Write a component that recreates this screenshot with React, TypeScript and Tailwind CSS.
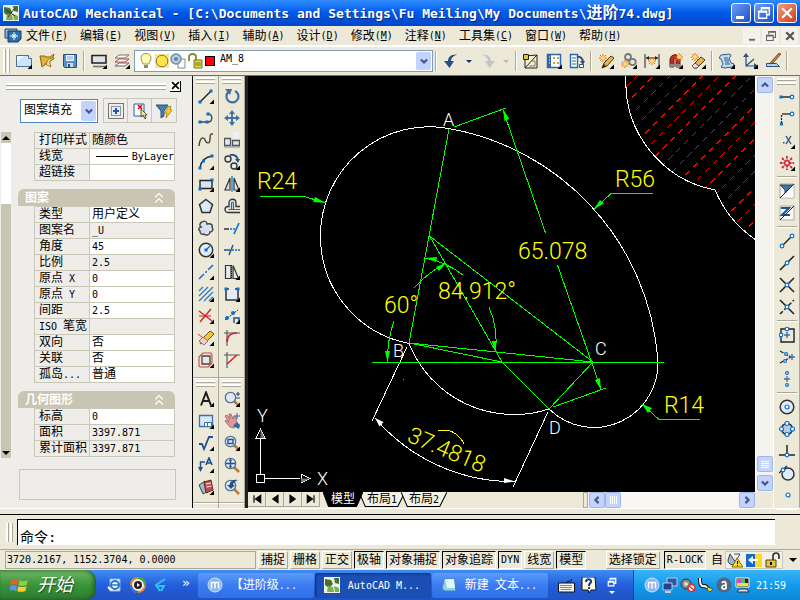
import type { ReactNode } from 'react'
import { clsx } from 'clsx'

const FONT = "font-['DejaVu_Sans_Mono','Noto_Sans_CJK_SC',monospace]"

// Latin runs are half the width of a Chinese glyph, so they get their own size
function Mixed({ text }: { text: string }) {
  return (
    <>
      {text.split(/([\x20-\x7e]+)/).map((part, i) =>
        /^[\x20-\x7e]+$/.test(part) ? (
          <span key={i} className="text-[10px] whitespace-pre">{part}</span>
        ) : (
          part
        ),
      )}
    </>
  )
}

function Svg({ children, className = 'size-4' }: { children: ReactNode; className?: string }) {
  return (
    <svg viewBox="0 0 16 16" fill="none" className={className} aria-hidden="true">
      {children}
    </svg>
  )
}

const NAVY = '#26507f'
const BLUE = '#0b6fd0'
const INK = '#222'

function Dot({ x, y }: { x: number; y: number }) {
  return <rect x={x - 1.5} y={y - 1.5} width="3" height="3" fill={BLUE} />
}

function Ring({ x, y, r = 1.8 }: { x: number; y: number; r?: number }) {
  return <circle cx={x} cy={y} r={r} fill="#fff" stroke={BLUE} strokeWidth="1.2" />
}

function Lens({ children }: { children?: ReactNode }) {
  return (
    <>
      <path d="M10 10l5 5" stroke="#b97f35" strokeWidth="2.6" />
      <circle cx="6.5" cy="6.5" r="5.2" fill="#dbe9f8" stroke="#57718e" strokeWidth="1.3" />
      {children}
    </>
  )
}

function Spark({ x, y }: { x: number; y: number }) {
  return (
    <g>
      <path d={`M${x - 4} ${y}h8M${x} ${y - 4}v8M${x - 3} ${y - 3}l6 6M${x + 3} ${y - 3}l-6 6`} stroke="#ee6a20" strokeWidth="1" />
      <circle cx={x} cy={y} r="2" fill="#ffe25a" />
    </g>
  )
}

function Pencil() {
  return (
    <>
      <path d="M4 15l2-5 7-7 3 2-7 8z" fill="#e9b64c" stroke="#4d3713" strokeWidth="1" />
      <path d="M4 15l2-4 2 2z" fill="#222" />
    </>
  )
}

const icons: Record<string, ReactNode> = {
  // standard bar
  new: <><path d="M.5 2.500h12l3 3v8H.5z" fill="#cfe3fa" stroke="#4c7197" /><path d="M1 3h7L1 9z" fill="#eef6ff" /><path d="M12.500 2.500v3h3" fill="#fff" stroke="#4c7197" /></>,
  open: <><path d="M1 3h5l1 1h4l4-3-2 6-6 4-4 3z" fill="#e3b13f" stroke="#8a6415" /><path d="M15 5c-5 0-8 3-7 5l-2 1 6 3-1-4c-1-2 1-3 4-4z" fill="#f7d982" stroke="#8a6415" strokeWidth=".8" /></>,
  save: <><path d="M1.500 1.500h13v13h-12l-1-1z" fill="#5a8fc8" stroke="#245081" /><path d="M4 2h8v6H4z" fill="#eef4fa" /><path d="M5 4h6M5 6h6" stroke="#86a9cc" /><path d="M5 10h6v4H5z" fill="#cfdbe8" /><path d="M6 11h2v3H6z" fill="#245081" /></>,
  display: <><path d="M1 2.500h14v7.500H1z" fill="#dce2e8" stroke={INK} strokeWidth="1.6" /><path d="M2 13.500h12" stroke="#777" strokeWidth="1.6" /></>,
  layers: <><path d="M5 2h10l-4 3H1z" fill="#fff" stroke="#777" /><path d="M5 6h10l-4 3H1z" fill="#fff" stroke="#c8343c" /><path d="M5 10h10l-4 3H1z" fill="#fff" stroke="#666" /></>,
  undo: <path d="M14.500 1.500C8 1 5 4 5 8H1l5.500 7L11 8H8c0-3 2-5 6.500-6.500z" fill="#2a4f86" />,
  redo: <path d="M1.500 1.500C8 1 11 4 11 8h4l-5.500 7L5 8h3c0-3-2-5-6.500-6.500z" fill="#c3c6c6" />,
  sketch: <><path d="M2 15V3l12-1v13z" fill="#f6efc9" stroke={INK} /><path d="M2 15L14 2" stroke={INK} /><path d="M.5 1.500h5v5h-5z" fill="#e0c832" stroke={INK} /><path d="M9 8h3v5H6" stroke="#777" /></>,
  table: <><path d="M1.500 1.500h13v13h-13z" fill="#fff" stroke="#2f66a6" strokeWidth="1.5" /><path d="M2 2h3v12H2z" fill="#2f66a6" /><path d="M3 4h1M3 7h1M3 10h1" stroke="#fff" /><path d="M7 4h2v2H7zM11 4h2v2h-2zM7 9h2v2H7zM11 9h2v2h-2z" fill="#c0a542" /></>,
  exportTable: <><path d="M1.500 1.500h7v13h-7z" fill="#fff" stroke="#2f66a6" strokeWidth="1.4" /><path d="M3 5h4M3 8h4M3 11h4" stroke="#2f66a6" /><path d="M8 4c4-1 6 2 6 6" stroke="#2a4f86" strokeWidth="2" /><path d="M11 8h5l-2 4z" fill="#2a4f86" /><path d="M10.500 11.500h4v3h-4z" fill="#fff" stroke="#2a4f86" /></>,
  pen: <><Pencil /><Spark x={5} y={5} /></>,
  gears: <><circle cx="7" cy="4" r="3" stroke="#777" strokeWidth="1.8" /><circle cx="11.500" cy="9" r="3.200" stroke="#777" strokeWidth="1.8" /><Spark x={4} y={11} /></>,
  dims: <><path d="M1 1v14M15 1v14M2 5h12" stroke={INK} /><path d="M2 5l3-2v4zM14 5l-3-2v4z" fill={INK} /><Spark x={8} y={8} /></>,
  magnet: <><path d="M3 14V7c0-7 10-7 10 0v7H9V7c0-2-2-2-2 0v7z" fill="#c22b25" stroke="#6d1612" /><path d="M3 11h4v3H3zM9 11h4v3H9z" fill="#888" /><Spark x={12} y={4} /></>,
  eraser: <><path d="M2 13l9-9 4 3-8 8H4z" fill="#e9b64c" stroke="#4d3713" /><path d="M2 13l3-3 4 3-2 2H4z" fill="#f7dfe4" stroke="#555" /><Spark x={5} y={4} /></>,
  roll: <><path d="M2 2l9-1 1 2-2 2 2 5 3 1-1 3-9 1-3-1 2-3-2-5-2-1z" fill="#c4d8ee" stroke="#2f5b8d" /><path d="M5 5h4M5 7h5M6 9h4M6 11h5" stroke="#2f5b8d" /></>,
  axes: <><path d="M4 2v11h11M4 13l8-7" stroke={NAVY} strokeWidth="1.2" /><path d="M1 4l3-4 3 4zM12 10l4 3-4 3z" fill={NAVY} /></>,
  edit: <><path d="M1.500 10.500h10l3 3h-13z" fill="#b9d4f0" stroke={NAVY} /><path d="M6 9L14 0l2 1-8 9-3 1z" fill="#c9803a" stroke="#5f3913" strokeWidth=".8" /></>,
  // draw
  line: <><path d="M2 14L13 3" stroke={INK} strokeWidth="1.4" /><Dot x={2} y={14} /><Dot x={13} y={3} /></>,
  pline: <><path d="M2 12h8c5 0 5-8 0-8" stroke="#445" strokeWidth="1.4" /><Dot x={2} y={12} /><Dot x={9} y={12} /><Dot x={10} y={4} /></>,
  spline: <path d="M1 14C2 4 6 5 7 8s5 5 5-1 1-5 3-5" stroke="#444" strokeWidth="1.4" />,
  arc: <><path d="M2 14C3 7 7 3 14 2" stroke={INK} strokeWidth="1.5" /><Dot x={2} y={14} /><Dot x={5.500} y={7} /><Dot x={14} y={2} /></>,
  rect: <><path d="M2 4.500h12v8H2z" fill="#d5e5f6" stroke={INK} strokeWidth="1.4" /><Dot x={2} y={13} /><Dot x={14} y={4} /></>,
  polygon: <path d="M8 1.500l6.500 5-2.500 8H4l-2.500-8z" fill="#dbe8f5" stroke="#333" strokeWidth="1.5" />,
  cloud: <path d="M4 2c3-2 5 0 5 2 4-1 6 1 5 3 2 3 0 5-2 5 0 3-4 4-6 2-3 1-4-1-4-3-2-1-1-4 1-4-2-2-1-4 1-5z" fill="#d5e2ee" stroke="#444" strokeWidth="1.4" />,
  circle: <><circle cx="8" cy="8" r="6.700" fill="#e2eefa" stroke="#333" strokeWidth="1.5" /><path d="M8 8l4-4" stroke={BLUE} strokeWidth="1.3" /><Dot x={8} y={8} /></>,
  xline: <path d="M1 15L15 1" stroke={BLUE} strokeWidth="1.5" strokeDasharray="7 2 2 2" />,
  hatch: <path d="M1 5l4-4M1 10l9-9M1 15L15 1M6 15l9-9M11 15l4-4" stroke="#3477bd" strokeWidth="1.3" />,
  trim: <><path d="M1 3l13 10M2 14L13 1" stroke="#d3222a" strokeWidth="1.4" /><path d="M1 8h12" stroke="#d3222a" strokeWidth="1" /></>,
  rub: <><path d="M2 14L14 2" stroke="#c33" strokeWidth="1.4" /><path d="M5 8l7-7 4 3-7 7z" fill="#f0c832" stroke="#6b5310" /><path d="M1 11l4-4 5 4-4 4z" fill="#f3ccd2" stroke="#777" /><path d="M0 4l5 4" stroke="#c33" /></>,
  bound: <><path d="M4 4h8v8H4z" fill="#e8e6e0" stroke="#444" strokeWidth="1.300" /><path d="M1 5l4-4h8l1 2v8l-4 4H2l-1-1z" stroke="#c8474c" strokeWidth="1.1" /></>,
  text: <path d="M3 14.500L8 1.500l5 13M5 10h6" stroke="#1e1e1e" strokeWidth="2" />,
  sheet: <><path d="M1.500 2.500h13v11h-13z" fill="#d7e8fa" stroke="#3a70aa" strokeWidth="1.3" /><path d="M6.500 9.500h7v4h-7z" fill="#fff" stroke="#3a70aa" /><path d="M9.500 9.500v4" stroke="#3a70aa" /></>,
  check: <path d="M1 9h3l2 5L11 2h4" stroke="#22508d" strokeWidth="1.8" />,
  leader: <><path d="M2.500 13V5H7" stroke="#22508d" strokeWidth="1.500" /><path d="M0 10h5l-2.500 5z" fill="#22508d" /><path d="M8 8l3-7 3 7M9 6h4" stroke="#22508d" strokeWidth="1.7" /></>,
  block: <><path d="M1 6l6-4 3 10-5 3z" fill="#99b8dc" stroke="#444" /><path d="M6 3l7-2 2 10-7 3z" fill="#c64b45" stroke="#5d2724" /><path d="M8 5l5-1M8.500 8l5-1" stroke="#fff" /></>,
  // modify
  rotate: <><path d="M5 3.500A6 6 0 1 0 11 3" stroke="#3f71a8" strokeWidth="2.2" /><path d="M1 1h7L6 7z" fill="#3f71a8" /></>,
  move: <><path d="M8 2v12M2 8h12" stroke="#3f71a8" strokeWidth="2" /><path d="M5 4l3-4 3 4zM5 12l3 4 3-4zM4 5L0 8l4 3zM12 5l4 3-4 3z" fill="#3f71a8" /></>,
  copyBox: <><path d="M9 0h6v6H9z" fill="#eaf1fb" /><path d="M.5 6.500h6v7h-6zM8.500 8.500h7v5h-7z" fill="#dbe7f4" stroke="#555" strokeWidth="1.3" /><path d="M0 15h16" stroke="#888" /></>,
  copy: <><circle cx="4" cy="5" r="3" fill="#e2ecf7" stroke="#333" strokeWidth="1.4" /><circle cx="10" cy="12" r="3" fill="#e2ecf7" stroke="#333" strokeWidth="1.4" /><path d="M6 1c5-1 7 1 8 5" stroke="#22508d" strokeWidth="1.8" /><path d="M11 5h5l-2 4z" fill="#22508d" /></>,
  mirror: <><path d="M6 2v12H1zM10 2v12h5z" fill="#e5e5e0" stroke="#333" strokeWidth="1.2" /><path d="M8 0v16" stroke={BLUE} strokeWidth="1.2" /></>,
  offset: <><path d="M16 14.500H4c-4 0-4-6 0-6h1V5c0-5 7-5 7 0v3.500h4" stroke="#333" strokeWidth="1.300" /><path d="M16 11.500H4.500M7.500 11V5.500c0-2 2-2 2 0V11" stroke={BLUE} strokeWidth="1.200" /></>,
  trimLine: <><path d="M0 9h5" stroke={INK} strokeWidth="1.4" /><path d="M6 9h5" stroke={BLUE} strokeWidth="1.3" strokeDasharray="2 1" /><path d="M10 14l5-11" stroke={BLUE} strokeWidth="1.6" /></>,
  extend: <><path d="M0 8h6M5 13l4-10" stroke={NAVY} strokeWidth="1.5" /><path d="M8 8h8" stroke={BLUE} strokeWidth="1.4" strokeDasharray="2 1" /></>,
  scale: <><path d="M1.500 1.500v13H7v-13zM9 1.500L14.500 14.500H9z" fill="#e1e8ef" stroke="#333" strokeWidth="1.2" /><path d="M7.500 1v14" stroke="#111" strokeDasharray="1 1" /></>,
  stretch: <><path d="M2 3v11h12V3" fill="#e1ecf8" stroke="#333" strokeWidth="1.5" /><path d="M2 3h3M11 3h3" stroke="#333" strokeWidth="1.5" /><Dot x={2} y={3} /><Dot x={14} y={3} /></>,
  divide: <><path d="M1 12L14 2" stroke={INK} strokeWidth="1" strokeDasharray="2 1" /><circle cx="3" cy="10" r="2" fill={BLUE} /><circle cx="9" cy="5" r="2" fill={BLUE} /><path d="M10 15v-5h5v5" stroke="#22508d" strokeWidth="1.5" /></>,
  fillet: <><path d="M3 0v16M0 3h16" stroke="#555" strokeWidth="1.1" /><path d="M3 12c0-6 4-9 10-9" stroke="#d3222a" strokeWidth="1.700" /></>,
  chamfer: <><path d="M3 0v16M0 3h16" stroke="#555" strokeWidth="1.1" /><path d="M3 12l10-9" stroke="#d3222a" strokeWidth="1.600" /></>,
  zoomPm: <><Lens /><path d="M12 3h4M14 1v4M12 7h4" stroke="#22508d" strokeWidth="1.2" /></>,
  hand: <><path d="M1 3l2-1 3 4-1-5 2 0 2 5 1-3 2 1 1 7-3 4-4-1-5-6 1-1 3 2z" fill="#d99a98" stroke="#9c5a5e" strokeWidth=".8" /><path d="M9 13l4-4 3 3-1 4z" fill="#2f66a6" /><path d="M13 0v6M10 3h6" stroke="#2f66a6" /></>,
  zoomWin: <Lens><path d="M4 4.500h5v4H4z" stroke="#22508d" strokeWidth="1.4" /></Lens>,
  zoomPan: <Lens><path d="M6.500 2v9M2 6.500h9" stroke="#22508d" strokeWidth="1.4" /><path d="M5 4l1.500-2L8 4zM5 9l1.500 2L8 9z" fill="#22508d" /></Lens>,
  zoomPrev: <Lens><path d="M14 1C9 0 6 2 5.500 6H3l4 4 4-4H9c0-2 2-4 5-5z" fill="#2a4f86" /></Lens>,
  // osnap
  track: <><path d="M2 8h11" stroke={INK} strokeWidth="1.4" /><Dot x={2} y={8} /><Ring x={13} y={8} /></>,
  from: <><path d="M12 3H3" stroke={INK} strokeWidth="1.3" /><path d="M2.500 4v8" stroke={INK} strokeWidth="1.3" strokeDasharray="2 1" /><Dot x={2.500} y={13} /><Ring x={13} y={3} /></>,
  dotX: <><rect x="4" y="9" width="1.500" height="1.500" fill={NAVY} /><path d="M7 3l5 8M12 3l-5 8" stroke={NAVY} strokeWidth="1.4" /></>,
  burst: <><path d="M8 1v5M8 10v5M1 8h5M10 8h5M3 3l3.500 3.500M13 3L9.500 6.500M3 13l3.500-3.500M13 13L9.500 9.500" stroke="#d3222a" strokeWidth="1.800" strokeDasharray="2.500 1" /><circle cx="8" cy="8" r="2" fill="#fff" stroke="#d3222a" /></>,
  filter: <><path d="M1 1h14v14H1z" fill="#f8f8f4" stroke="#aaa" /><path d="M1 2h13l-5 5v3H6V7z" fill="#44759f" stroke="#274b6b" /><path d="M14.500 2v12.500H2z" fill="#fff" /><path d="M1 15L15 1" stroke={INK} /></>,
  zed: <><path d="M1 1h14v14H1z" fill="#f8f8f4" stroke="#aaa" /><path d="M2 3h8L3 10h8" stroke="#22508d" strokeWidth="2" /><path d="M1 15L15 1" stroke={INK} /></>,
  endpoint: <><path d="M3 13L13 3" stroke={INK} strokeWidth="1.5" /><Ring x={3} y={13} /><Ring x={13} y={3} /></>,
  midpoint: <><path d="M1 15L15 1" stroke={INK} strokeWidth="1.6" /><Ring x={8} y={8} /></>,
  intersect: <><path d="M1 15L15 1M1 1l14 14" stroke={INK} strokeWidth="1.5" /><Ring x={8} y={8} /></>,
  apparent: <><path d="M1 15L15 1" stroke={INK} strokeWidth="1.5" strokeDasharray="4 2" /><path d="M1 1l14 14" stroke={INK} strokeWidth="1.6" /><Ring x={8} y={8} /></>,
  center: <><path d="M2 2h13v13H2z" stroke={INK} strokeWidth="1.4" /><path d="M5 8h6M8 5v6" stroke="#3f71a8" strokeWidth="1.4" /><Ring x={8} y={2} /><Ring x={2} y={8} /></>,
  converge: <><path d="M1 2l11 6M1 14l11-6" stroke={INK} strokeWidth="1.200" strokeDasharray="4 1" /><path d="M11 8h5M13 5v6" stroke="#3f71a8" strokeWidth="1.4" /><Ring x={7} y={5} r={1.4} /><Ring x={6} y={12} r={1.4} /></>,
  colon: <><path d="M8 5v6M5 8h6" stroke="#3f71a8" strokeWidth="1.3" /><Ring x={8} y={2} r={1.4} /><Ring x={8} y={14} r={1.4} /></>,
  centre: <><circle cx="8" cy="8" r="6.800" fill="#e2ecf6" stroke="#333" strokeWidth="1.5" /><Ring x={8} y={8} r={2} /></>,
  quadrant: <><circle cx="8" cy="8" r="5.500" fill="#b9cbdc" stroke="#333" strokeWidth="1.500" /><Ring x={8} y={2.500} r={2} /><Ring x={8} y={13.500} r={2} /><Ring x={2.500} y={8} r={2} /><Ring x={13.500} y={8} r={2} /></>,
  perp: <><path d="M0 12h16M8 2v10" stroke={INK} strokeWidth="1.5" /><Ring x={8} y={12} /></>,
  tangent: <><circle cx="9" cy="9" r="6" fill="#e2ecf6" stroke="#333" strokeWidth="1.5" /><path d="M0 8l8-7" stroke={INK} strokeWidth="1.300" /><Ring x={4} y={5} /></>,
  node: <Ring x={9} y={8} r={2} />,
}

interface Tool {
  icon: string
  flyout?: boolean
}

function parse(list: string): Tool[] {
  return list.split(' ').map((s) => ({ icon: s.replace('+', ''), flyout: s.endsWith('+') }))
}

function ToolButton({ icon, flyout }: Tool) {
  return (
    <button type="button" aria-label={icon} className="flex h-[22px] w-[23px] shrink-0 items-center justify-center">
      <Svg>
        {icons[icon]}
        {flyout && <path d="M11.500 16H16v-4.500z" fill="#000" />}
      </Svg>
    </button>
  )
}

function VSep() {
  return <div className="mx-[2px] h-5 w-[2px] shrink-0 border-l border-[#aca899] bg-white" />
}

function Grip() {
  return (
    <div className="flex h-[9px] w-full shrink-0 flex-col justify-center gap-px px-[3px]">
      <div className="h-[3px] border-b border-[#aca899] bg-white" />
      <div className="h-[3px] border-b border-[#aca899] bg-white" />
    </div>
  )
}

function Chevron({ dir, className = 'size-2.5' }: { dir: 'up' | 'down' | 'left' | 'right'; className?: string }) {
  const d = { up: 'M3 10.500l5-5 5 5', down: 'M3 5.500l5 5 5-5', left: 'M10.500 3l-5 5 5 5', right: 'M5.500 3l5 5-5 5' }[dir]
  return (
    <Svg className={className}>
      <path d={d} stroke="#3f5687" strokeWidth="3.400" />
    </Svg>
  )
}

function TitleBar() {
  return (
    <header className="flex h-[26px] shrink-0 items-center gap-1 bg-linear-to-b from-[#2f8bff] via-[#0058e8] to-[#0047c8] px-[3px] text-white">
      <Svg className="size-4 bg-white">
        <path d="M0 0h16v16H0z" fill="#e9efdd" />
        <path d="M1 2l6 1 2 4-4 4-4-3zM10 1h5v6l-4-1z" fill="#4a6f34" />
        <path d="M4 9l5 1 1 5H3zM10 9l5 2v4h-4z" fill="#7fae4e" />
        <path d="M3 5l9 6M12 3L5 12" stroke="#263a1c" />
      </Svg>
      <h1 className="flex-1 truncate text-[13px] font-bold [text-shadow:1px_1px_#0a2a80]">
        AutoCAD Mechanical - [C:\Documents and Settings\Fu Meiling\My Documents\<span className="text-[16px]">进阶</span>74.dwg]
      </h1>
      <div className="flex gap-[3px]">
        <button type="button" aria-label="Minimize" className="flex h-5 w-5 items-end rounded-[3px] border border-white bg-linear-to-br from-[#6f9cf5] to-[#1c50c8] pb-[3px] pl-1">
          <span className="h-[3px] w-2 bg-white" />
        </button>
        <button type="button" aria-label="Restore" className="flex h-5 w-5 items-center justify-center rounded-[3px] border border-white bg-linear-to-br from-[#6f9cf5] to-[#1c50c8]">
          <Svg className="size-3.5">
            <path d="M5 5V2h9v8h-3M5 3h9M2 6h9v8H2zM2 7h9" stroke="#fff" strokeWidth="1.500" />
          </Svg>
        </button>
        <button type="button" aria-label="Close" className="flex h-5 w-5 items-center justify-center rounded-[3px] border border-white bg-linear-to-br from-[#f09a80] to-[#cf3a10]">
          <Svg className="size-3.5"><path d="M2.500 2.500l11 11M13.500 2.500l-11 11" stroke="#fff" strokeWidth="2.400" /></Svg>
        </button>
      </div>
    </header>
  )
}

const MENUS = [
  ['文件', 'F'], ['编辑', 'E'], ['视图', 'V'], ['插入', 'I'], ['辅助', 'A'], ['设计', 'D'],
  ['修改', 'M'], ['注释', 'N'], ['工具集', 'C'], ['窗口', 'W'], ['帮助', 'H'],
]

function MenuBar() {
  return (
    <nav className="flex h-[19px] shrink-0 items-center gap-3 px-[2px] pl-1">
      <Svg className="-mr-2 h-4 w-[18px]">
        <path d="M0 1h12v9H0z" fill="#8fb0cf" stroke="#27496d" />
        <path d="M3 3h13v8l-3 3H3z" fill="#2a6fae" stroke="#173f66" />
        <path d="M9 4v8M5 8h8M7 6l4 4M11 6l-4 4" stroke="#fff" />
      </Svg>
      {MENUS.map(([name, key]) => (
        <button key={key} type="button" className="flex items-center text-[12px] leading-4 whitespace-nowrap">
          {name}
          <span className="text-[10px]">(<u>{key}</u>)</span>
        </button>
      ))}
      <div className="ml-auto flex gap-[2px]">
        <button type="button" aria-label="Minimize drawing" className="flex h-4 w-[17px] items-center justify-center bg-[#f4f2ea]">
          <Svg className="size-3"><path d="M4 13h8" stroke="#666" strokeWidth="2.500" /></Svg>
        </button>
        <button type="button" aria-label="Restore drawing" className="flex h-4 w-[17px] items-center justify-center bg-[#f4f2ea]">
          <Svg className="size-3"><path d="M5 6V2h9v8h-3M5 3h9M2 7h9v7H2zM2 8h9" stroke="#666" strokeWidth="1.400" /></Svg>
        </button>
        <button type="button" aria-label="Close drawing" className="flex h-4 w-[17px] items-center justify-center bg-[#f4f2ea]">
          <Svg className="size-3"><path d="M3 3l10 10M13 3L3 13" stroke="#555" strokeWidth="3" /></Svg>
        </button>
      </div>
    </nav>
  )
}

function Caret({ dim }: { dim?: boolean }) {
  return (
    <button type="button" aria-label="History" className="flex h-[22px] w-[14px] items-center justify-center">
      <span className={clsx('border-x-[3px] border-t-[3px] border-x-transparent', dim ? 'border-t-[#b8b8b0]' : 'border-t-[#1d2f6a]')} />
    </button>
  )
}

function LayerCombo() {
  return (
    <div className="relative ml-px h-[22px] w-[299px] shrink-0 border border-[#7f9db9] bg-white">
      <select aria-label="Layer" className="block h-4 w-full appearance-none pl-[85px] text-[10px] leading-4 outline-none">
        <option>AM_8</option>
      </select>
      <div className="pointer-events-none absolute inset-y-0 left-[3px] flex items-center">
        <Svg><path d="M5 11c0-2-2-3-2-6 0-6 10-6 10 0 0 3-2 4-2 6z" fill="#fff9b8" stroke="#a59528" /><path d="M6 12h4v3H6z" fill="#888" /></Svg>
        <Svg><path d="M1 1h14v14H1z" fill="#f3e69a" /><circle cx="8" cy="8" r="5.800" fill="#ffe24d" stroke="#8c7a1a" /></Svg>
        <Svg><path d="M8 6h7v9H8z" fill="#fff" stroke="#888" /><circle cx="6" cy="6" r="5" fill="#b9cde2" stroke="#6d8bad" strokeWidth="1.500" /><circle cx="6" cy="6" r="2" fill="#5f82a8" /></Svg>
        <Svg className="ml-0.5 size-4"><path d="M1 8V4c0-4 7-4 7 0v4" stroke="#8a8a2a" strokeWidth="1.800" /><path d="M6 7h8v8H6z" fill="#dcdc4a" stroke="#77771f" /><path d="M7 10h6M7 12h6" stroke="#77771f" /></Svg>
        <span className="ml-px size-[10px] border border-black bg-[#f00]" />
      </div>
      <div className="pointer-events-none absolute inset-y-px right-px flex w-[15px] items-center justify-center rounded-[2px] bg-[#c3d3fb]">
        <Chevron dir="down" />
      </div>
    </div>
  )
}

function TopToolbar() {
  return (
    <div className="flex h-[31px] shrink-0 items-center border-t-2 border-b border-t-white border-b-[#716f64]">
      <div className="flex h-6 w-3 gap-px pl-[3px]">
        <div className="w-[3px] border-r border-[#aca899] bg-white" />
        <div className="w-[3px] border-r border-[#aca899] bg-white" />
      </div>
      {parse('new+ open save').map((t) => <ToolButton key={t.icon} {...t} />)}
      <VSep />
      {parse('display+ layers+').map((t) => <ToolButton key={t.icon} {...t} />)}
      <LayerCombo />
      <VSep />
      <ToolButton icon="undo" />
      <Caret />
      <ToolButton icon="redo" />
      <Caret dim />
      <VSep />
      {parse('sketch table+ exportTable').map((t) => <ToolButton key={t.icon} {...t} />)}
      <VSep />
      {parse('pen+ gears+ dims+ magnet+ eraser+').map((t) => <ToolButton key={t.icon} {...t} />)}
      <VSep />
      {parse('roll+ axes+ edit').map((t) => <ToolButton key={t.icon} {...t} />)}
      <VSep />
    </div>
  )
}

interface Row {
  name: string
  value: string
  readOnly?: boolean
}

const GENERAL: Row[] = [
  { name: '打印样式', value: '随颜色', readOnly: true },
  { name: '线宽', value: 'ByLayer' },
  { name: '超链接', value: '' },
]

const PATTERN: Row[] = [
  { name: '类型', value: '用户定义' },
  { name: '图案名', value: '_U', readOnly: true },
  { name: '角度', value: '45' },
  { name: '比例', value: '2.5', readOnly: true },
  { name: '原点 X', value: '0' },
  { name: '原点 Y', value: '0' },
  { name: '间距', value: '2.5' },
  { name: 'ISO 笔宽', value: '', readOnly: true },
  { name: '双向', value: '否' },
  { name: '关联', value: '否' },
  { name: '孤岛...', value: '普通' },
]

const GEOMETRY: Row[] = [
  { name: '标高', value: '0' },
  { name: '面积', value: '3397.871', readOnly: true },
  { name: '累计面积', value: '3397.871', readOnly: true },
]

function PropertyTable({ rows }: { rows: Row[] }) {
  return (
    <table className="ml-4 w-[141px] table-fixed border-collapse text-[12px] leading-[15px]">
      <tbody>
        {rows.map((row) => (
          <tr key={row.name} className="h-4">
            <th scope="row" className="w-[55px] overflow-hidden border border-[#c9c7b8] p-0 pl-1 text-left font-normal whitespace-nowrap">
              <Mixed text={row.name} />
            </th>
            <td className={clsx('overflow-hidden border border-[#c9c7b8] p-0 pl-[2px] whitespace-nowrap', !row.readOnly && 'bg-white')}>
              {row.value === 'ByLayer' ? (
                <span className="flex items-center justify-end gap-1">
                  <span className="h-px w-8 bg-black" />
                  <Mixed text={row.value} />
                </span>
              ) : (
                <Mixed text={row.value} />
              )}
            </td>
          </tr>
        ))}
      </tbody>
    </table>
  )
}

function SectionHead({ title }: { title: string }) {
  return (
    <button type="button" className="mt-2 flex h-[17px] w-[157px] items-center justify-between rounded-t-[6px] bg-[#c8c5b2] pr-[10px] pl-[7px] text-[12px] leading-4 font-bold text-white">
      {title}
      <Svg className="size-3"><path d="M3 7l5-5 5 5M3 14l5-5 5 5" stroke="#fff" strokeWidth="1.600" /></Svg>
    </button>
  )
}

function PropertiesPalette() {
  return (
    <aside className="flex w-[193px] shrink-0 flex-col border-r border-black bg-[#eeede9]">
      <div className="mt-1 flex h-3 items-center gap-1 pl-[6px]">
        <div className="flex w-[160px] flex-col gap-px">
          <div className="h-[3px] border-b border-[#aca899] bg-white" />
          <div className="h-[3px] border-b border-[#aca899] bg-white" />
        </div>
        <button type="button" aria-label="Close palette" className="flex size-[11px] items-center justify-center border-r border-b border-black bg-white">
          <Svg className="size-[9px]"><path d="M2 2l12 12M14 2L2 14" stroke="#000" strokeWidth="3" /></Svg>
        </button>
      </div>

      <div className="mt-1.5 flex items-center gap-[5px] pl-5">
        <div className="relative h-6 w-[78px] border border-[#4f86c0] bg-white">
          <select aria-label="Object type" className="block h-5 w-full appearance-none pl-[3px] text-[12px] leading-5 outline-none">
            <option>图案填充</option>
          </select>
          <div className="pointer-events-none absolute inset-y-px right-px flex w-[15px] items-center justify-center rounded-[2px] bg-[#c3d3fb]">
            <Chevron dir="down" />
          </div>
        </div>
        <div className="flex h-[25px] divide-x divide-[#c9c7b8] border border-[#c9c7b8]">
          <button type="button" aria-label="Toggle pick add" className="flex w-6 items-center justify-center">
            <Svg><path d="M.5 .5h15v15H.5z" stroke="#000" strokeDasharray="1 1" /><path d="M3.500 3.500h9v9h-9z" fill="#e4eefa" stroke="#345" strokeDasharray="1 1" /><path d="M8 5v6M5 8h6" stroke="#1e5ba8" strokeWidth="2" /></Svg>
          </button>
          <button type="button" aria-label="Select objects" className="flex w-6 items-center justify-center">
            <Svg><path d="M2 1h10v12H2z" fill="#fff" stroke="#2a5ea0" /><path d="M6 2l4 4M10 2L6 6" stroke="#e00" strokeWidth="1.600" /><path d="M9 6v8l2-2 2 4 1-1-1-3h2z" fill="#f7e68c" stroke="#333" strokeWidth=".8" /></Svg>
          </button>
          <button type="button" aria-label="Quick select" className="flex w-6 items-center justify-center">
            <Svg><path d="M0 2h12l-4 6v5l-3 2V8z" fill="#4b7dab" stroke="#2c5278" /><path d="M12 4l3-1-1 4h2l-6 8 1-5H9z" fill="#f8d327" stroke="#a17c09" strokeWidth=".8" /></Svg>
          </button>
        </div>
      </div>

      <div className="mt-[9px] flex min-h-0 flex-1">
        <div className="ml-px flex h-[326px] w-[10px] flex-col bg-[#c8c5b2]">
          <button type="button" aria-label="Scroll up" className="flex h-[11px] items-center justify-center bg-[#c8c5b2]">
            <Svg className="size-2"><path d="M0 12l8-8 8 8z" fill="#000" /></Svg>
          </button>
          <div className="h-[61px] bg-white" />
          <button type="button" aria-label="Scroll down" className="mt-auto flex h-[11px] items-center justify-center">
            <Svg className="size-2"><path d="M0 4l8 8 8-8z" fill="#000" /></Svg>
          </button>
        </div>
        <div className="ml-[7px] flex-1">
          <PropertyTable rows={GENERAL} />
          <SectionHead title="图案" />
          <PropertyTable rows={PATTERN} />
          <SectionHead title="几何图形" />
          <PropertyTable rows={GEOMETRY} />
          <div className="mt-3 ml-px h-[31px] w-[157px] border border-[#c9c7b8]" />
        </div>
      </div>
    </aside>
  )
}

const DRAW = parse('line+ pline spline arc+ rect+ polygon cloud circle+ xline+ hatch+ trim+ rub+ bound+')
const NOTE = parse('text+ sheet+ check+ leader+ block+')
const MODIFY = parse('rotate move copyBox copy+ mirror+ offset trimLine extend scale+ stretch+ divide+ fillet chamfer')
const VIEW = parse('zoomPm+ hand zoomWin+ zoomPan zoomPrev')

function ToolColumn({ top, bottom }: { top: Tool[]; bottom: Tool[] }) {
  return (
    <div className="flex w-[26px] flex-col items-center border-r border-[#aca899]">
      <Grip />
      {top.map((t) => <ToolButton key={t.icon} {...t} />)}
      <div className="mt-1.5 h-[2px] w-full border-t border-[#aca899] bg-white" />
      <Grip />
      {bottom.map((t) => <ToolButton key={t.icon} {...t} />)}
      <div className="mt-1 h-[2px] w-full border-t border-[#aca899] bg-white" />
    </div>
  )
}

const SNAPS = ['track from dotX+ burst+', 'filter zed', 'endpoint midpoint intersect apparent', 'center converge colon', 'centre quadrant perp tangent node'].map(parse)

function SnapBar() {
  return (
    <div className="flex w-[27px] shrink-0 flex-col items-center border-x border-l-white border-r-[#aca899] pt-px">
      <Grip />
      {SNAPS.map((group, i) => (
        <div key={i} className="flex w-full flex-col items-center">
          {group.map((t) => <ToolButton key={t.icon} {...t} />)}
          <div className="my-[2px] h-[2px] w-5 border-t border-[#aca899] bg-white" />
        </div>
      ))}
    </div>
  )
}

// x + y of each 45 degree hatch line
const HATCH = Array.from({ length: 19 }, (_, i) => 713 + i * 16.4)

const CAD_TEXT = "font-['Roboto',sans-serif] font-light"

function Drawing() {
  return (
    <svg viewBox="248 76 507 416" preserveAspectRatio="xMinYMin slice" className="block h-full w-full" fill="none">
      <defs>
        <clipPath id="region">
          <path d="M626 76A110 110 0 0 0 715 190A113 113 0 0 0 756 240V76z" />
        </clipPath>
      </defs>
      <g clipPath="url(#region)" stroke="#f00" strokeDasharray="6 5" shapeRendering="crispEdges">
        {HATCH.map((sum, i) => (
          <path key={i} d={`M${sum - 250} 250L${sum - 70} 70`} strokeDashoffset={i % 2 ? 4 : 0} />
        ))}
      </g>

      <g stroke="#fff" shapeRendering="crispEdges">
        <path d="M626 76A110 110 0 0 0 715 190A113 113 0 0 0 756 240" />
        <path d="M409 343.500A109 109 0 0 1 320.500 236A109 109 0 0 1 449 128.500A254 254 0 0 1 657.500 356A64 64 0 0 1 549 409" />
        <path d="M409 343.500A113 113 0 0 0 549 409" />
        <path d="M407 347L372 421M548 412L513 487" />
        <path d="M375 418A181 181 0 0 0 515 481.500" />
        <path d="M256.500 474.500h8v8h-8zM260.500 474V438M264 478.500h36M256 438h9l-4.500-9zM301 474v9l9-4.500z" />
      </g>
      <path d="M375 418l8.500 4-4 4.500zM515 481.500l-11-3.500v5z" fill="#fff" />
      <path d="M260.500 438v-9l4 9zM301 478.500h9l-9 4z" fill="#777" />

      <g stroke="#0f0" shapeRendering="crispEdges">
        <path d="M449 129L409 343M372 362h292M429.500 236L593 362L549 409L502 362L429.500 236M409 343L593 362M409 343L502 362" />
        <path d="M454 127L506 108M503 110L545.500 233M557.500 265L601 389M553 407L606 388" />
        <path d="M387.500 362A115 115 0 0 1 394 321M414 288A115 115 0 0 1 446 263" />
        <path d="M425 258A87 87 0 0 1 463 275M489 307A87 87 0 0 1 495.500 352" />
        <path d="M260 196.500h44l22 6.500M653 193.500h-42l-17 16M700 419.500h-41l-17-15.500" />
        <path d="M403 379h1" />
      </g>
      <g fill="#0f0">
        <path d="M503 109l6.500 10-5 2zM601 390l-6-10 5-2z" />
        <path d="M387.500 362l-2.500-11h5zM446 263l-7 8-3-4z" />
        <path d="M425 258l12-1-1 5zM495.500 352l-4-11h5z" />
        <path d="M326 203l-13-1 2-5zM594 209l6-9 4 3.500zM642 404l10 4-4 5z" />
      </g>

      <g fill="#ff0" fontSize="23" className={CAD_TEXT}>
        <text x="257" y="189">R24</text>
        <text x="615" y="187">R56</text>
        <text x="664" y="413">R14</text>
        <text x="518" y="259">65.078</text>
        <text x="384" y="313">60°</text>
        <text x="438" y="299">84.912°</text>
        <text x="406" y="441" transform="rotate(23 406 441)">37.4818</text>
      </g>
      <path d="M438 431Q455 427 464 444" stroke="#ff0" shapeRendering="crispEdges" />
      <g fill="#fff" fontSize="18" className={CAD_TEXT}>
        <text x="443" y="126">A</text>
        <text x="393" y="357">B</text>
        <text x="595" y="355">C</text>
        <text x="549" y="434">D</text>
        <text x="257" y="422">Y</text>
        <text x="317" y="485">X</text>
      </g>
    </svg>
  )
}

function ScrollButton({ dir }: { dir: 'up' | 'down' | 'left' | 'right' }) {
  return (
    <button type="button" aria-label={`Scroll ${dir}`} className="flex size-4 shrink-0 items-center justify-center rounded-[2px] border border-[#9eb5e8] bg-[#c3d3fb]">
      <Chevron dir={dir} />
    </button>
  )
}

function LayoutTab({ name, active }: { name: string; active?: boolean }) {
  return (
    <button type="button" className={clsx('relative -ml-1 flex h-[15px] items-center px-2 text-[12px] leading-[15px]', active && 'z-10 text-white')}>
      <svg viewBox="0 0 44 15" preserveAspectRatio="none" className="absolute inset-0 h-full w-full" aria-hidden="true">
        <path d="M0 0l6 14.500h31L44 0" fill={active ? '#000' : '#f3f1e6'} stroke="#000" />
      </svg>
      <span className="relative"><Mixed text={name} /></span>
    </button>
  )
}

const NAV_PATHS = ['M4 3v10M13 3L6 8l7 5z', 'M12 3L5 8l7 5z', 'M4 3l7 5-7 5z', 'M3 3l7 5-7 5zM12 3v10']

function DrawingArea() {
  return (
    <main className="flex min-w-0 flex-1 flex-col border-l-[3px] border-[#222]">
      <div className="flex min-h-0 flex-1">
        <div className="min-w-0 flex-1 overflow-hidden bg-black">
          <Drawing />
        </div>
        <div className="flex w-[18px] shrink-0 flex-col items-center gap-[3px] border-l border-white bg-[#f5f4ef] py-px">
          <ScrollButton dir="up" />
          <button type="button" aria-label="Vertical position" className="mt-auto flex h-4 w-4 flex-col items-center justify-center gap-px rounded-[2px] border border-[#9eb5e8] bg-[#c3d3fb]">
            {[0, 1, 2, 3].map((i) => <span key={i} className="h-px w-2 bg-white" />)}
          </button>
          <ScrollButton dir="down" />
        </div>
      </div>
      <div className="flex h-4 shrink-0 items-start">
        <div className="flex">
          {NAV_PATHS.map((d) => (
            <button key={d} type="button" aria-label="Layout tabs" className="flex h-[15px] w-[18px] items-center justify-center border-r border-b border-[#aca899]">
              <Svg className="size-3"><path d={d} fill="#000" stroke="#000" strokeWidth="1.500" /></Svg>
            </button>
          ))}
        </div>
        <div className="ml-[7px] flex">
          <LayoutTab name="模型" active />
          <LayoutTab name="布局1" />
          <LayoutTab name="布局2" />
        </div>
        <div className="mr-[18px] ml-auto flex h-4 w-[172px] bg-[#f8f7f3]">
          <div className="mr-px w-[5px] border border-[#aca899] bg-[#ece9d8]" />
          <ScrollButton dir="left" />
          <button type="button" aria-label="Horizontal position" className="flex h-4 w-4 items-center justify-center gap-px rounded-[2px] border border-[#9eb5e8] bg-[#c3d3fb]">
            {[0, 1, 2, 3].map((i) => <span key={i} className="h-2 w-px bg-white" />)}
          </button>
          <div className="flex-1" />
          <ScrollButton dir="right" />
        </div>
      </div>
    </main>
  )
}

function CommandLine() {
  return (
    <div className="flex h-9 shrink-0 items-start border-t border-b border-t-black border-b-[#aca899] pt-1 pr-[25px]">
      <div className="mt-1 flex h-[19px] w-[17px] gap-px pl-[6px]">
        <div className="w-[3px] border-r border-[#aca899] bg-white" />
        <div className="w-[3px] border-r border-[#aca899] bg-white" />
      </div>
      <div className="flex h-[26px] flex-1 items-end border-t border-l border-black bg-white pl-[2px]">
        <label htmlFor="command" className="text-[14px] leading-4">命令:</label>
        <input id="command" type="text" className="h-4 flex-1 bg-transparent pl-1 text-[10px] outline-none" />
      </div>
    </div>
  )
}

const MODES = [
  { name: '捕捉' },
  { name: '栅格' },
  { name: '正交' },
  { name: '极轴', on: true },
  { name: '对象捕捉', on: true },
  { name: '对象追踪', on: true },
  { name: 'DYN', on: true },
  { name: '线宽' },
  { name: '模型', on: true },
]

function ModeButton({ name, on }: { name: string; on?: boolean }) {
  return (
    <button
      type="button"
      aria-pressed={!!on}
      className={clsx(
        'flex h-[18px] shrink-0 items-center border px-[2px] text-[12px] leading-4',
        on ? 'border-t-black border-r-white border-b-white border-l-black' : 'border-t-white border-r-[#aca899] border-b-[#aca899] border-l-white',
      )}
    >
      <Mixed text={name} />
    </button>
  )
}

function StatusBar() {
  return (
    <div className="flex h-5 shrink-0 items-center gap-[2px] pl-[5px]">
      <div className="h-[18px] w-[251px] border border-[#aca899] pl-px text-[10px] leading-4">3720.2167, 1152.3704, 0.0000</div>
      {MODES.map((m) => <ModeButton key={m.name} {...m} />)}
      <div className="ml-auto flex items-center gap-1">
        <ModeButton name="选择锁定" />
        <ModeButton name="R-LOCK" on />
        <button type="button" className="ml-px text-[12px] leading-4">自</button>
      </div>
      <div className="flex h-[18px] w-[58px] items-center justify-around border border-[#c9c7b8] bg-[#f3f1e8]">
        <Svg><path d="M1 8c0 5 6 6 8 3L3 2z" fill="#9db8d6" stroke="#345" /><path d="M7 2l6 0-4 7" stroke="#456" /><path d="M10 6l6 9H5z" fill="#ffdc2e" stroke="#7e6600" /><path d="M10.500 9v3M10.500 13v1" stroke="#000" /></Svg>
        <Svg><path d="M0 2h16v13H0z" fill="#1867cf" /><path d="M9 2h7v13H9z" fill="#ffd62a" /><path d="M2 8l5-4v3h5v2H7v3z" fill="#fff" /></Svg>
        <Svg><path d="M8 8V4c0-4 6-4 6 0v3" stroke="#333" strokeWidth="1.700" /><path d="M1 8h10v7H1z" fill="#e6c73c" stroke="#4f410b" /><path d="M6 10v3" stroke="#000" strokeWidth="2" /></Svg>
      </div>
      <button type="button" aria-label="Status bar menu" className="mr-[3px] ml-1 flex h-4 items-center">
        <span className="block border-x-4 border-t-4 border-x-transparent border-t-black" />
      </button>
    </div>
  )
}

function Maxthon() {
  return (
    <Svg className="size-4 shrink-0">
      <circle cx="8" cy="8" r="7" fill="#8ab6ef" stroke="#d4e5fb" />
      <path d="M4.500 11.500v-6h7v6M8 6v5.500" stroke="#fff" strokeWidth="1.500" />
    </Svg>
  )
}

function TaskButton({ text, icon, active }: { text: string; icon: ReactNode; active?: boolean }) {
  return (
    <button
      type="button"
      className={clsx(
        'flex h-[25px] w-[116px] min-w-0 items-center gap-2 rounded-[3px] px-[9px] text-[12px] whitespace-pre text-white',
        active ? 'bg-[#1b4fb4] shadow-[inset_1px_1px_2px_#0c2f7c]' : 'bg-linear-to-b from-[#5a9bfa] via-[#3b7bf0] to-[#3070e8]',
      )}
    >
      {icon}
      <span className="truncate leading-4"><Mixed text={text} /></span>
    </button>
  )
}

function Taskbar() {
  return (
    <footer className="flex h-[30px] shrink-0 items-center bg-linear-to-b from-[#3f8cf3] via-[#245edb] to-[#1f52c4] text-white">
      <button type="button" className="flex h-full w-24 items-center gap-2 rounded-r-[10px] bg-linear-to-b from-[#6fb768] via-[#3a943a] to-[#2e7a30] pl-[10px] shadow-[inset_-2px_0_4px_#1d5a22]">
        <Svg className="h-5 w-[19px]">
          <path d="M1 4c2-1 4-1 6 0L6 8C4 7 2 7 0 8z" fill="#ef5b2c" />
          <path d="M8 4c2 1 4 1 7 0l-1 4c-3 1-5 1-7 0z" fill="#8fcf3c" />
          <path d="M0 9c2-1 4-1 6 0l-1 4c-2-1-4-1-5 0z" fill="#5a95f2" />
          <path d="M7 9c2 1 4 1 7 0l-1 4c-3 1-5 1-7 0z" fill="#f8cd35" />
        </Svg>
        <span className="text-[18px] leading-6 italic [text-shadow:1px_1px_1px_#1b4d1f]">开始</span>
      </button>
      <div className="flex items-center gap-[7px] pl-[11px]">
        <Svg><path d="M3 2h10v12H3z" fill="#f4f8fd" stroke="#8db0dd" /><circle cx="8" cy="8" r="4" stroke="#2275d1" strokeWidth="2" /><path d="M4 8h8" stroke="#2275d1" strokeWidth="1.500" /><path d="M1 10l3 3" stroke="#fff" strokeWidth="2" /></Svg>
        <Svg><circle cx="8" cy="8" r="7" fill="#f5f5f5" stroke="#e8862a" strokeWidth="2" /><path d="M8 1a7 7 0 0 1 7 7" stroke="#4aa338" strokeWidth="2" /><path d="M1 8a7 7 0 0 0 7 7" stroke="#2d6ed6" strokeWidth="2" /><circle cx="8" cy="8" r="4" fill="#222" /><path d="M7 6l3 2-3 2z" fill="#fff" /></Svg>
        <Svg><path d="M12 2L3 8l4 6M5 9h6l-3 5" stroke="#2fc0f5" strokeWidth="2" /></Svg>
        <button type="button" className="ml-1.5 self-start text-[13px] leading-3">»</button>
      </div>
      <div className="ml-2 flex min-w-0 gap-px">
        <TaskButton text="【进阶级..." icon={<Maxthon />} />
        <TaskButton active text="AutoCAD M..." icon={<Svg className="size-4 shrink-0"><path d="M0 0h16v16H0z" fill="#edf1e4" /><path d="M1 2l6 1 2 4-4 4-4-3zM10 1h5v6l-4-1z" fill="#4a6f34" /><path d="M4 9l5 1 1 5H3zM10 9l5 2v4h-4z" fill="#7fae4e" /></Svg>} />
        <TaskButton text="新建 文本..." icon={<Svg className="size-4 shrink-0"><path d="M3 2h10l2 12H4L1 12z" fill="#8fd0ea" stroke="#3f86ad" /><path d="M4 2h9l1 9H6z" fill="#e3f4fb" /></Svg>} />
      </div>
      <div className="ml-2.5 flex flex-1 items-center gap-1.5">
        <Svg className="h-4 w-[17px]"><path d="M0 6h16v9H0z" fill="#f5f5f0" stroke="#111" /><path d="M2 8.500h12M2 10.500h12M3 12.500h10" stroke="#111" strokeDasharray="1 1" /><path d="M8 6c0-3 5 0 5-4" stroke="#111" /></Svg>
        <Svg><path d="M1 0h13l1 13-5 0-2 3-1-3H1z" fill="#fdfbe0" stroke="#111" /><path d="M5 5c0-4 6-3 5 0-1 2-2 1-2 4M8 10v2" stroke="#1230a0" strokeWidth="2" /></Svg>
        <div className="ml-1 flex flex-col items-center gap-1">
          <Svg className="size-2.5"><path d="M5 5V2h9v8h-3M5 3h9M2 7h9v7H2zM2 8h9" stroke="#fff" strokeWidth="2" /></Svg>
          <span className="border-x-[3px] border-t-[3px] border-x-transparent border-t-white" />
        </div>
      </div>
      <div className="flex h-full w-[167px] shrink-0 items-center gap-[2px] border-l border-[#0b4ba8] bg-linear-to-b from-[#36b4f7] via-[#139bec] to-[#0f86d8] pl-[10px]">
        <Maxthon />
        <Svg><path d="M5 1h10v8H5z" fill="#3355a8" stroke="#bcd" /><path d="M1 6h9v7H1z" fill="#26408a" stroke="#bcd" /><path d="M3 15h6" stroke="#ccd" strokeWidth="2" /></Svg>
        <Svg><circle cx="6" cy="7" r="5" fill="#888" stroke="#333" /><circle cx="6" cy="7" r="2" fill="#ddd" /><circle cx="11.500" cy="11" r="3.500" fill="#fff" stroke="#d9302a" strokeWidth="1.600" /><path d="M9 9l5 4" stroke="#d9302a" strokeWidth="1.500" /></Svg>
        <Svg><path d="M2 1c0 5 0 9 5 8l4 3" stroke="#111" strokeWidth="4" /><path d="M2 1c0 5 0 9 5 8l4 3" stroke="#f3f3f3" strokeWidth="2" /><path d="M10 10l5 2-3 3-3-2z" fill="#e6d23a" stroke="#554" /></Svg>
        <Svg><circle cx="8" cy="8" r="7.500" fill="#51657d" /><path d="M6 6c1-2 4-2 4 1v5M10 8c-5 0-5 4-2 4 1 0 2-1 2-2" stroke="#fff" strokeWidth="1.700" /></Svg>
        <Svg><path d="M2 1h13v9H2z" fill="#222" stroke="#fff" /><path d="M3 2h4v4H3z" fill="#e93bd6" /><path d="M7 2h4v4H7z" fill="#37d048" /><path d="M3 6h11v3H3z" fill="#f5e13a" /><path d="M5 12h8l2 3H3z" fill="#ddd" stroke="#333" /></Svg>
        <time className="ml-1 text-[10px]">21:59</time>
      </div>
    </footer>
  )
}

export default function App() {
  return (
    <div className={clsx('flex h-screen min-h-[600px] w-full flex-col overflow-hidden bg-[#ece9d8] text-black', FONT)}>
      <TitleBar />
      <MenuBar />
      <TopToolbar />
      <div className="flex min-h-0 flex-1">
        <PropertiesPalette />
        <div className="flex w-[52px] shrink-0">
          <ToolColumn top={DRAW} bottom={NOTE} />
          <ToolColumn top={MODIFY} bottom={VIEW} />
        </div>
        <DrawingArea />
        <SnapBar />
      </div>
      <div className="h-1.5 shrink-0 border-t border-white" />
      <CommandLine />
      <StatusBar />
      <Taskbar />
    </div>
  )
}
